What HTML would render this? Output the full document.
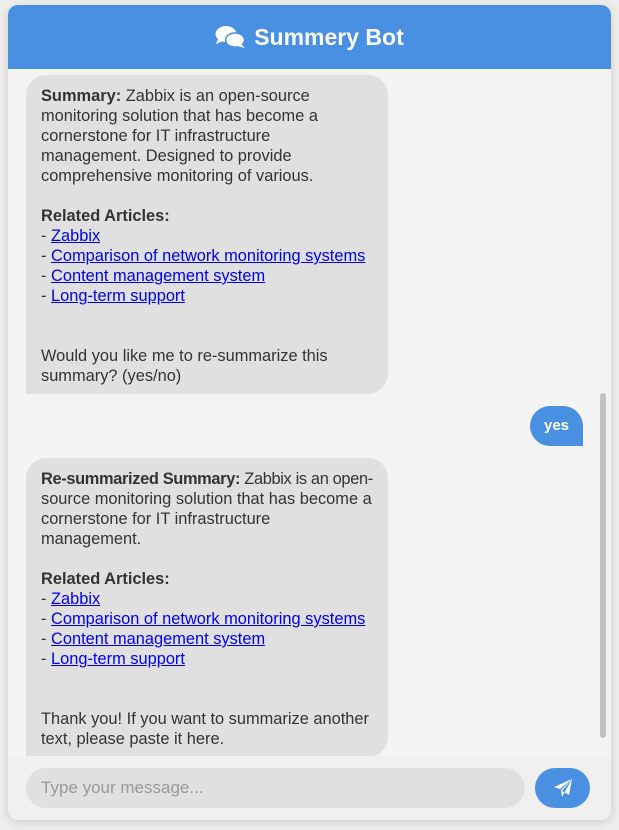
<!DOCTYPE html>
<html><head><style>
body{margin:0;background:#efeeec;font-family:"Liberation Sans",sans-serif;}
.c{position:absolute;left:8px;top:5px;width:603px;height:815px;border-radius:10px;overflow:hidden;box-shadow:0 2px 10px rgba(0,0,0,.15);background:#f0f0f0}
.h{height:64px;background:#4a90e2;color:#fff;font-weight:bold;font-size:23px;display:flex;align-items:center;justify-content:center;gap:8px}
.m{position:absolute;top:64px;left:0;width:603px;height:687px;background:#f4f4f4;overflow:hidden}
.b{position:absolute;left:18px;width:332px;background:#e0e0e0;border-radius:20px 20px 20px 0;padding:11px 15px 8px;font-size:16.4px;line-height:20px;color:#333}
.b a{color:#00e}
.u{position:absolute;left:522px;top:337px;width:53px;height:40px;background:#4a90e2;color:#fff;border-radius:20px 20px 0 20px;font-size:15px;font-weight:bold;text-align:center;line-height:40px}
.sb{position:absolute;left:592px;top:324px;width:6px;height:345px;background:#c1c1c1;border-radius:3px}
.i{position:absolute;left:18px;top:763px;width:499px;height:40px;background:#e0e0e0;border-radius:20px;color:#999;font-size:17px;line-height:40px;padding-left:15px;box-sizing:border-box}
.s{position:absolute;left:527px;top:763px;width:55px;height:40px;background:#4a90e2;border-radius:20px;display:flex;align-items:center;justify-content:center}
</style></head><body>
<div class="c">
<div class="h"><svg width="31" height="24" viewBox="0 0 31 24"><ellipse cx="11" cy="9" rx="10.5" ry="8" fill="#fff"/><path d="M3 14 L1 19 L8 16Z" fill="#fff"/><ellipse cx="20" cy="15" rx="9.5" ry="7" fill="#fff" stroke="#4a90e2" stroke-width="1.5"/><path d="M26 19 L30 23 L22 21Z" fill="#fff"/></svg>Summery Bot</div>
<div class="m">
<div class="b" style="top:6px"><b>Summary:</b> Zabbix is an open-source monitoring solution that has become a cornerstone for IT infrastructure management. Designed to provide comprehensive monitoring of various.<br><br><b>Related Articles:</b><br>- <a href="#">Zabbix</a><br>- <a href="#">Comparison of network monitoring systems</a><br>- <a href="#">Content management system</a><br>- <a href="#">Long-term support</a><br><br><br>Would you like me to re-summarize this summary? (yes/no)</div>
<div class="u">yes</div>
<div class="b" style="top:389px;white-space:nowrap"><span style="letter-spacing:-0.35px"><b>Re-summarized Summary:</b> Zabbix is an open-</span><br>source monitoring solution that has become a<br>cornerstone for IT infrastructure<br>management.<br><br><b>Related Articles:</b><br>- <a href="#">Zabbix</a><br>- <a href="#">Comparison of network monitoring systems</a><br>- <a href="#">Content management system</a><br>- <a href="#">Long-term support</a><br><br><br>Thank you! If you want to summarize another<br>text, please paste it here.</div>
<div class="sb"></div>
</div>
<div class="i">Type your message...</div>
<div class="s"><svg width="20" height="20" viewBox="0 0 20 20"><path d="M19 1 L1 9 L7 11 Z M19 1 L8 12 L9 19 Z M19 1 L16 17 L9 13 Z" fill="#fff"/></svg></div>
</div>
</body></html>
